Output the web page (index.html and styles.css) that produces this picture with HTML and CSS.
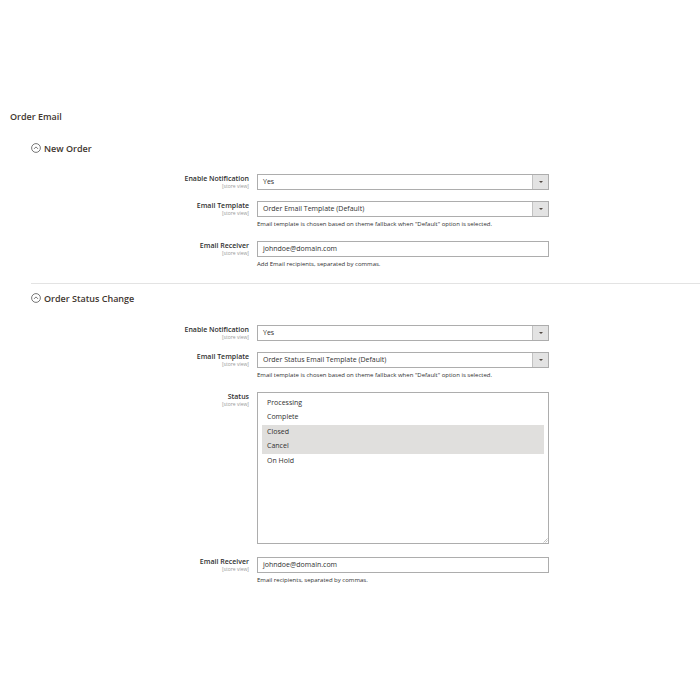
FILE: index.html
```html
<!DOCTYPE html>
<html lang="en">
<head>
<meta charset="utf-8">
<title>Order Email</title>
<link rel="stylesheet" href="styles.css">
</head>
<body>
<div class="page">
  <h1 class="section-title">Order Email</h1>

  <section class="group">
    <div class="group-title">
      <svg class="toggle" viewBox="0 0 10 10" width="10" height="10"><circle cx="5" cy="5" r="4.4" fill="none" stroke="#555" stroke-width="0.8"/><path d="M3 5.9 L5 3.9 L7 5.9" fill="none" stroke="#555" stroke-width="0.8"/></svg>
      <span>New Order</span>
    </div>
    <div class="rows">
      <div class="row">
        <div class="label"><span class="name">Enable Notification</span><span class="scope">[store view]</span></div>
        <div class="control">
          <div class="select"><span class="value">Yes</span><span class="arrow"></span></div>
        </div>
      </div>
      <div class="row">
        <div class="label"><span class="name">Email Template</span><span class="scope">[store view]</span></div>
        <div class="control">
          <div class="select"><span class="value">Order Email Template (Default)</span><span class="arrow"></span></div>
          <p class="note">Email template is chosen based on theme fallback when "Default" option is selected.</p>
        </div>
      </div>
      <div class="row">
        <div class="label"><span class="name">Email Receiver</span><span class="scope">[store view]</span></div>
        <div class="control">
          <div class="input">johndoe@domain.com</div>
          <p class="note">Add Email recipients, separated by commas.</p>
        </div>
      </div>
    </div>
  </section>

  <section class="group group-bordered">
    <div class="group-title">
      <svg class="toggle" viewBox="0 0 10 10" width="10" height="10"><circle cx="5" cy="5" r="4.4" fill="none" stroke="#555" stroke-width="0.8"/><path d="M3 5.9 L5 3.9 L7 5.9" fill="none" stroke="#555" stroke-width="0.8"/></svg>
      <span>Order Status Change</span>
    </div>
    <div class="rows">
      <div class="row">
        <div class="label"><span class="name">Enable Notification</span><span class="scope">[store view]</span></div>
        <div class="control">
          <div class="select"><span class="value">Yes</span><span class="arrow"></span></div>
        </div>
      </div>
      <div class="row">
        <div class="label"><span class="name">Email Template</span><span class="scope">[store view]</span></div>
        <div class="control">
          <div class="select"><span class="value">Order Status Email Template (Default)</span><span class="arrow"></span></div>
          <p class="note">Email template is chosen based on theme fallback when "Default" option is selected.</p>
        </div>
      </div>
      <div class="row row-status">
        <div class="label"><span class="name">Status</span><span class="scope">[store view]</span></div>
        <div class="control">
          <div class="multiselect">
            <div class="option">Processing</div>
            <div class="option">Complete</div>
            <div class="option selected">Closed</div>
            <div class="option selected">Cancel</div>
            <div class="option">On Hold</div>
            <svg class="grip" viewBox="0 0 6 6" width="6" height="6"><path d="M5.5 1.5 L1.5 5.5 M5.5 3.5 L3.5 5.5" stroke="#999" stroke-width="0.6"/></svg>
          </div>
        </div>
      </div>
      <div class="row">
        <div class="label"><span class="name">Email Receiver</span><span class="scope">[store view]</span></div>
        <div class="control">
          <div class="input">johndoe@domain.com</div>
          <p class="note">Email recipients, separated by commas.</p>
        </div>
      </div>
    </div>
  </section>
</div>
</body>
</html>
```

FILE: styles.css
```css
* {
  box-sizing: border-box;
}

html, body {
  margin: 0;
  background: #fff;
}

body {
  font-family: "Open Sans", "Noto Sans", sans-serif;
  color: #303030;
}

.page {
  width: 700px;
  padding: 111px 0 0 10px;
}

.section-title {
  margin: 0;
  font-size: 9px;
  line-height: 12px;
  font-weight: 600;
  color: #41362f;
}

.group {
  margin-left: 21px;
}

.group:first-of-type {
  margin-top: 18px;
}

.group-bordered {
  margin-top: 13px;
  padding-top: 7px;
  border-top: 1px solid #e3e3e3;
}

.group-title {
  display: flex;
  align-items: center;
  gap: 3px;
  height: 14px;
  font-size: 9px;
  font-weight: 600;
  color: #41362f;
}

.toggle {
  display: block;
}

.rows {
  margin-top: 19px;
  display: flex;
  flex-direction: column;
  gap: 11px;
}

.group-bordered .rows {
  margin-top: 20px;
}

.row {
  display: grid;
  grid-template-columns: 218px 292px;
  column-gap: 8px;
  align-items: start;
}

.row-status {
  margin-bottom: 2px;
}

.label {
  display: flex;
  flex-direction: column;
  align-items: flex-end;
  text-align: right;
}

.name {
  font-size: 7px;
  line-height: 9px;
  font-weight: 600;
  color: #303030;
}

.scope {
  font-size: 5px;
  line-height: 6px;
  color: #999;
}

.select,
.input {
  height: 16px;
  border: 1px solid #adadad;
  background: #fff;
  font-size: 7px;
  line-height: 14px;
  color: #303030;
}

.select {
  display: flex;
}

.select .value {
  flex: 1;
  padding-left: 5px;
}

.select .arrow {
  position: relative;
  width: 16px;
  background: #e3e3e3;
  border-left: 1px solid #c2c2c2;
}

.select .arrow::after {
  content: "";
  position: absolute;
  left: 50%;
  top: 50%;
  margin: -1px 0 0 -2px;
  border-left: 2px solid transparent;
  border-right: 2px solid transparent;
  border-top: 2px solid #514943;
}

.input {
  padding-left: 5px;
}

.note {
  margin: 3px 0 1px;
  font-size: 6px;
  line-height: 9px;
  color: #303030;
}

.multiselect {
  position: relative;
  height: 152px;
  border: 1px solid #adadad;
  padding: 3px 4px;
  font-size: 7px;
}

.option {
  height: 14.4px;
  line-height: 14.4px;
  padding-left: 5px;
  color: #303030;
}

.option.selected {
  background: #e0dfdd;
}

.grip {
  position: absolute;
  right: 0;
  bottom: 0;
}
```
